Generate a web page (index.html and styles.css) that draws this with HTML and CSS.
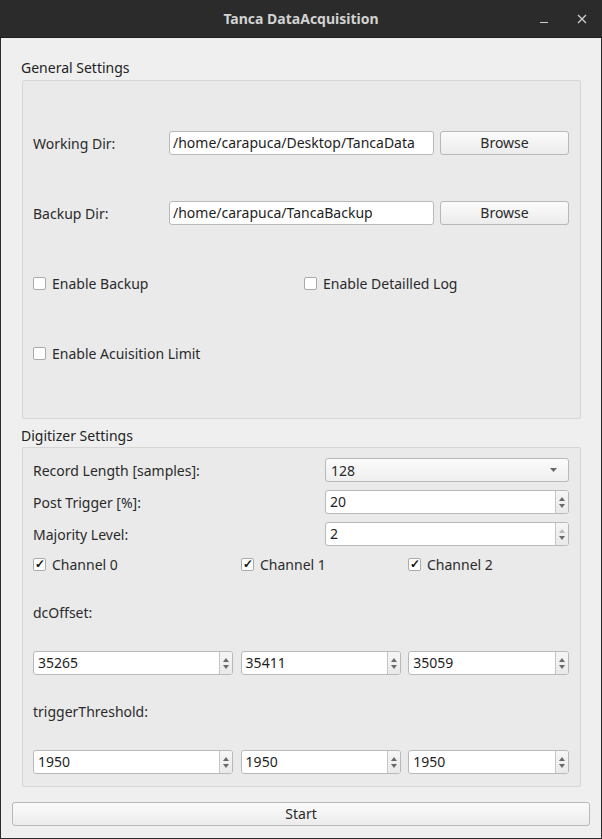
FILE: index.html
```html
<!DOCTYPE html>
<html>
<head>
<meta charset="utf-8">
<link rel="stylesheet" href="styles.css">
</head>
<body>
<div class="window">
  <div class="titlebar">
    <span class="title">Tanca DataAcquisition</span>
    <div class="wbtns">
      <svg class="wbtn" width="14" height="14" viewBox="0 0 14 14"><path d="M3 10.5h8" stroke="#cfcfcf" stroke-width="1.2"/></svg>
      <svg class="wbtn" width="14" height="14" viewBox="0 0 14 14"><path d="M3 3l8 8M11 3l-8 8" stroke="#cfcfcf" stroke-width="1.3"/></svg>
    </div>
  </div>
  <div class="content">
    <div class="group-title first">General Settings</div>
    <div class="group general">
      <div class="dirrow">
        <span class="label dirlabel">Working Dir:</span>
        <div class="lineedit dirinput">/home/carapuca/Desktop/TancaData</div>
        <div class="button browse">Browse</div>
      </div>
      <div class="dirrow">
        <span class="label dirlabel">Backup Dir:</span>
        <div class="lineedit dirinput">/home/carapuca/TancaBackup</div>
        <div class="button browse">Browse</div>
      </div>
      <div class="checkrow">
        <label class="check col1"><span class="box"></span>Enable Backup</label>
        <label class="check"><span class="box"></span>Enable Detailled Log</label>
      </div>
      <div class="checkrow">
        <label class="check col1"><span class="box"></span>Enable Acuisition Limit</label>
      </div>
    </div>
    <div class="group-title second">Digitizer Settings</div>
    <div class="group digitizer">
      <div class="formrow">
        <span class="label formlabel">Record Length [samples]:</span>
        <div class="combo"><span>128</span><svg width="7" height="4" viewBox="0 0 7 4"><path d="M0 0h7L3.5 4z" fill="#666"/></svg></div>
      </div>
      <div class="formrow">
        <span class="label formlabel">Post Trigger [%]:</span>
        <div class="spin wide"><span class="val">20</span><span class="arrows"><i class="up"></i><i class="down"></i></span></div>
      </div>
      <div class="formrow">
        <span class="label formlabel">Majority Level:</span>
        <div class="spin wide"><span class="val">2</span><span class="arrows"><i class="up dis"></i><i class="down"></i></span></div>
      </div>
      <div class="chanrow">
        <label class="check c0"><span class="box on">✓</span>Channel 0</label>
        <label class="check c1"><span class="box on">✓</span>Channel 1</label>
        <label class="check c2"><span class="box on">✓</span>Channel 2</label>
      </div>
      <div class="textrow">dcOffset:</div>
      <div class="spinrow">
        <div class="spin s0"><span class="val">35265</span><span class="arrows"><i class="up"></i><i class="down"></i></span></div>
        <div class="spin s1"><span class="val">35411</span><span class="arrows"><i class="up"></i><i class="down"></i></span></div>
        <div class="spin s2"><span class="val">35059</span><span class="arrows"><i class="up"></i><i class="down"></i></span></div>
      </div>
      <div class="textrow">triggerThreshold:</div>
      <div class="spinrow">
        <div class="spin s0"><span class="val">1950</span><span class="arrows"><i class="up"></i><i class="down"></i></span></div>
        <div class="spin s1"><span class="val">1950</span><span class="arrows"><i class="up"></i><i class="down"></i></span></div>
        <div class="spin s2"><span class="val">1950</span><span class="arrows"><i class="up"></i><i class="down"></i></span></div>
      </div>
    </div>
    <div class="button start">Start</div>
  </div>
</div>
</body>
</html>
```
FILE: styles.css
```css
* { box-sizing: border-box; }
html, body { margin: 0; padding: 0; background: #2b2b2b; }
body {
  font-family: "Noto Sans", "Open Sans", sans-serif;
  font-size: 14px;
  color: #2a2a2a;
}
.window {
  width: 602px;
  height: 839px;
  background: #2b2b2b;
  border-radius: 11px 11px 0 0;
  overflow: hidden;
  display: flex;
  flex-direction: column;
}
.titlebar {
  height: 38px;
  flex: none;
  display: flex;
  align-items: center;
  justify-content: center;
  position: relative;
  border-bottom: 1px solid #1f1f1f;
}
.title {
  color: #d2d2d2;
  font-weight: bold;
  font-size: 14px;
}
.wbtns {
  position: absolute;
  right: 13px;
  top: 12px;
  display: flex;
  gap: 24px;
}
.content {
  flex: 1;
  margin: 0 1px 1px 1px;
  background: #efefef;
  padding: 0 12px 0 11px;
  display: flex;
  flex-direction: column;
}
.group-title {
  height: 20px;
  line-height: 20px;
  padding-left: 9px;
  color: #232323;
}
.group-title.first { margin-top: 20px; margin-bottom: 2px; }
.group-title.second { margin-top: 7px; margin-bottom: 1px; }
.group {
  margin-left: 10px;
  margin-right: 8px;
  border: 1px solid #d6d6d6;
  background: #eaeaea;
  border-radius: 2px;
  display: flex;
  flex-direction: column;
}
.general {
  height: 339px;
  padding: 50px 11px 0 10px;
  gap: 46px;
}
.digitizer {
  height: 340px;
  padding: 10px 11px 0 10px;
}
.label { white-space: nowrap; }
.dirrow {
  display: flex;
  align-items: center;
  height: 24px;
}
.dirlabel { width: 136px; flex: none; }
.lineedit {
  background: #fff;
  border: 1px solid #b9b9b9;
  border-radius: 3px;
  height: 24px;
  line-height: 22px;
  padding-left: 3px;
  color: #1e1e1e;
  white-space: nowrap;
  overflow: hidden;
}
.dirinput { width: 265px; flex: none; }
.button {
  border: 1px solid #b8b8b8;
  border-radius: 3px;
  background: linear-gradient(#fbfbfb, #ececec);
  height: 24px;
  line-height: 22px;
  text-align: center;
  color: #2a2a2a;
}
.browse { width: 129px; margin-left: 6px; flex: none; }
.checkrow {
  display: flex;
  align-items: center;
  height: 24px;
}
.check {
  display: flex;
  align-items: center;
  white-space: nowrap;
}
.check.col1 { width: 271px; }
.box {
  width: 13px;
  height: 13px;
  border: 1px solid #aaaaaa;
  border-radius: 2px;
  background: #fff;
  margin-right: 6px;
  flex: none;
  display: flex;
  align-items: center;
  justify-content: center;
  font-size: 12px;
  line-height: 1;
  color: #111;
  font-weight: bold;
}
.formrow {
  display: flex;
  align-items: center;
  height: 24px;
  margin-bottom: 8px;
}
.formlabel { width: 292px; flex: none; }
.combo {
  width: 244px;
  height: 24px;
  border: 1px solid #b9b9b9;
  border-radius: 3px;
  background: linear-gradient(#fbfbfb, #efefef);
  display: flex;
  align-items: center;
  justify-content: space-between;
  padding: 0 11px 0 5px;
}
.spin {
  height: 24px;
  background: #fff;
  border: 1px solid #b9b9b9;
  border-radius: 3px;
  display: flex;
  align-items: stretch;
  overflow: hidden;
}
.spin.wide { width: 244px; }
.spin .val {
  flex: 1;
  line-height: 22px;
  padding-left: 4px;
  color: #1e1e1e;
}
.arrows {
  width: 13px;
  border-left: 1px solid #c6c6c6;
  background: linear-gradient(#f6f6f6, #e9e9e9);
  display: flex;
  flex-direction: column;
  align-items: center;
  justify-content: center;
  gap: 3px;
}
.arrows i {
  display: block;
  width: 0;
  height: 0;
  border-left: 3.5px solid transparent;
  border-right: 3.5px solid transparent;
}
.arrows .up { border-bottom: 4px solid #6a6a6a; }
.arrows .up.dis { border-bottom-color: #b8b8b8; }
.arrows .down { border-top: 4px solid #6a6a6a; }
.chanrow {
  display: flex;
  align-items: center;
  height: 24px;
  margin-top: -2px;
}
.check.c0 { width: 208px; }
.check.c1 { width: 167px; }
.textrow {
  height: 24px;
  line-height: 24px;
  margin-top: 25px;
}
.spinrow {
  display: flex;
  height: 24px;
  margin-top: 26px;
}
.spin.s0 { width: 200px; margin-right: 8px; }
.spin.s1 { width: 161px; margin-right: 7px; }
.spin.s2 { width: 161px; }
.start {
  margin-top: 15px;
  width: 578px;
}
```
